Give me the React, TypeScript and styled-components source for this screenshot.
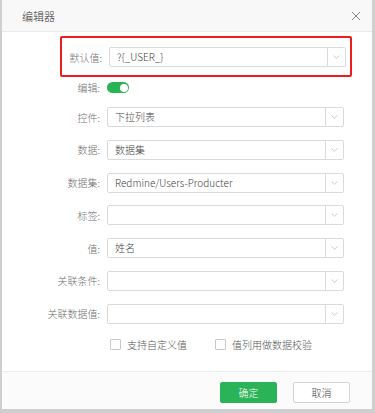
import React from 'react';
import styled, { createGlobalStyle } from 'styled-components';

const GlobalStyle = createGlobalStyle`
  html, body {
    margin: 0;
    padding: 0;
    background: #cfcfcf;
  }
  body {
    font-family: 'Noto Sans CJK SC', 'Noto Sans', sans-serif;
    font-weight: 300;
    width: 375px;
    height: 413px;
    overflow: hidden;
  }
`;

const Dialog = styled.div`
  margin-left: 2px;
  width: 370px;
  height: 409px;
  background: #fff;
  display: flex;
  flex-direction: column;
`;

const Header = styled.div`
  height: 31px;
  flex: none;
  display: flex;
  align-items: center;
  justify-content: space-between;
  padding: 0 8px 0 20px;
  background: #f8f8f8;
  border-bottom: 1px solid #e8e8e8;
`;

const Title = styled.span`
  font-size: 11px;
  color: #333;
`;

const CloseBtn = styled.button`
  width: 16px;
  height: 16px;
  border: 0;
  padding: 0;
  background: transparent;
  display: flex;
  align-items: center;
  justify-content: center;
`;

const Body = styled.div`
  flex: 1;
  display: flex;
  flex-direction: column;
  padding-top: 4px;
`;

const Highlight = styled.div`
  margin-left: 58px;
  width: 292px;
  box-sizing: border-box;
  border: 2px solid #ee1c1c;
  border-radius: 2px;
  padding: 9px 6px 8px 2px;
`;

const Rows = styled.div`
  display: flex;
  flex-direction: column;
  gap: 12.8px;
  margin-top: 12px;
`;

const Row = styled.div<{ $labelWidth: number }>`
  display: grid;
  grid-template-columns: ${(p) => p.$labelWidth}px 237px;
  column-gap: 7px;
  align-items: center;
`;

const Label = styled.label`
  font-size: 10px;
  color: #707070;
  text-align: right;
  white-space: nowrap;
`;

const Select = styled.div`
  height: 20px;
  box-sizing: border-box;
  border: 1px solid #dadada;
  border-radius: 2px;
  display: flex;
  background: #fff;
`;

const SelectText = styled.span`
  flex: 1;
  padding-left: 7px;
  font-size: 10px;
  line-height: 18px;
  color: #444;
  white-space: nowrap;
  overflow: hidden;
`;

const Arrow = styled.span`
  width: 17px;
  border-left: 1px solid #dadada;
  display: flex;
  align-items: center;
  justify-content: center;
`;

const ToggleRow = styled.div`
  display: grid;
  grid-template-columns: 98px auto;
  column-gap: 7px;
  align-items: center;
  margin-top: 3px;
`;

const Toggle = styled.span<{ $on: boolean }>`
  width: 22px;
  height: 11px;
  border-radius: 6px;
  background: ${(p) => (p.$on ? '#28b355' : '#ccc')};
  display: flex;
  align-items: center;
  justify-content: ${(p) => (p.$on ? 'flex-end' : 'flex-start')};
  padding: 0 1.5px;
  box-sizing: border-box;

  &::after {
    content: '';
    width: 8px;
    height: 8px;
    border-radius: 50%;
    background: #fff;
  }
`;

const Checks = styled.div`
  display: flex;
  margin: 13px 0 0 108px;
  gap: 28px;
`;

const Check = styled.label`
  display: flex;
  align-items: center;
  gap: 6px;
  font-size: 10px;
  color: #555;
`;

const Box = styled.span`
  width: 11px;
  height: 11px;
  box-sizing: border-box;
  border: 1px solid #c8c8c8;
  border-radius: 1px;
  background: #fff;
`;

const Footer = styled.div`
  height: 38px;
  flex: none;
  display: flex;
  justify-content: flex-end;
  align-items: flex-start;
  gap: 16px;
  padding: 10px 22px 0 0;
  box-sizing: border-box;
  border-top: 1px solid #ececec;
  background: #fbfbfb;
`;

const Button = styled.button<{ $primary?: boolean }>`
  width: 57px;
  height: 21px;
  box-sizing: border-box;
  border-radius: 2px;
  font-family: inherit;
  font-weight: 300;
  font-size: 10px;
  padding: 0;
  color: ${(p) => (p.$primary ? '#fff' : '#444')};
  background: ${(p) => (p.$primary ? '#2bb358' : '#fff')};
  border: 1px solid ${(p) => (p.$primary ? '#2bb358' : '#d4d4d4')};
`;

const Chevron = () => (
  <svg width="7" height="4" viewBox="0 0 7 4">
    <path d="M0.5 0.5 L3.5 3.3 L6.5 0.5" fill="none" stroke="#c4c4c4" strokeWidth="0.9" />
  </svg>
);

const Field = ({ label, value, labelWidth = 98 }: { label: string; value?: string; labelWidth?: number }) => (
  <Row $labelWidth={labelWidth}>
    <Label>{label}:</Label>
    <Select>
      <SelectText>{value}</SelectText>
      <Arrow>
        <Chevron />
      </Arrow>
    </Select>
  </Row>
);

const fields = [
  { label: '控件', value: '下拉列表' },
  { label: '数据', value: '数据集' },
  { label: '数据集', value: 'Redmine/Users-Producter' },
  { label: '标签', value: '' },
  { label: '值', value: '姓名' },
  { label: '关联条件', value: '' },
  { label: '关联数据值', value: '' },
];

const App = () => {
  return (
    <>
      <GlobalStyle />
      <Dialog>
        <Header>
          <Title>编辑器</Title>
          <CloseBtn>
            <svg width="10" height="10" viewBox="0 0 10 10">
              <path d="M1 1 L9 9 M9 1 L1 9" stroke="#888" strokeWidth="1" />
            </svg>
          </CloseBtn>
        </Header>
        <Body>
          <Highlight>
            <Field label="默认值" value="?{_USER_}" labelWidth={38} />
          </Highlight>
          <ToggleRow>
            <Label>编辑:</Label>
            <Toggle $on />
          </ToggleRow>
          <Rows>
            {fields.map((f) => (
              <Field key={f.label} label={f.label} value={f.value} />
            ))}
          </Rows>
          <Checks>
            <Check>
              <Box />
              支持自定义值
            </Check>
            <Check>
              <Box />
              值列用做数据校验
            </Check>
          </Checks>
        </Body>
        <Footer>
          <Button $primary>确定</Button>
          <Button>取消</Button>
        </Footer>
      </Dialog>
    </>
  );
};

export default App;
